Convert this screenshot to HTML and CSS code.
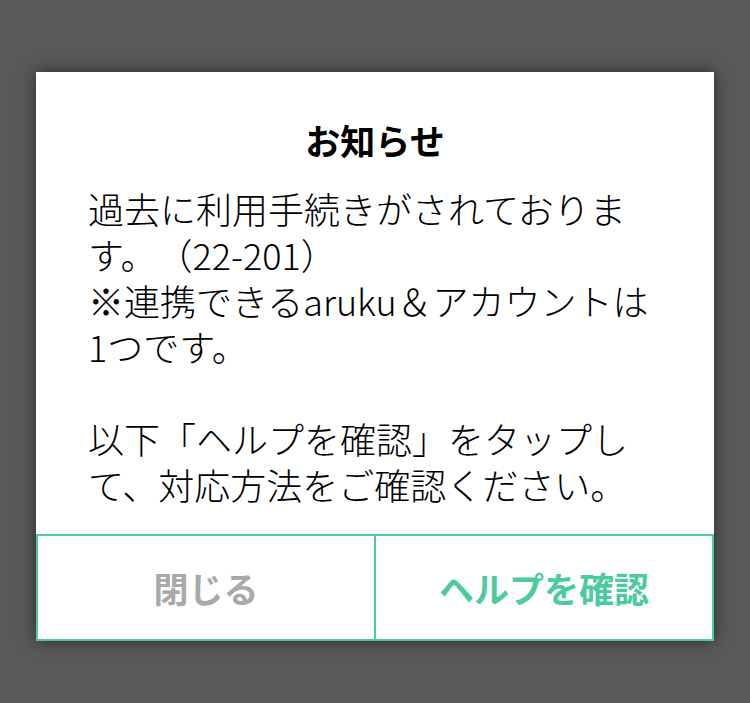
FILE: index.html
```html
<!DOCTYPE html>
<html lang="ja">
<head>
<meta charset="utf-8">
<title>お知らせ</title>
<link rel="stylesheet" href="styles.css">
</head>
<body>
<div class="overlay">
  <div class="dialog">
    <h1 class="dialog-title">お知らせ</h1>
    <div class="dialog-body">
      <p>過去に利用手続きがされております。（22-201）<br>※連携できるaruku＆アカウントは1つです。</p>
      <p>以下「ヘルプを確認」をタップして、対応方法をご確認ください。</p>
    </div>
    <div class="actions">
      <button class="btn btn-close">閉じる</button>
      <button class="btn btn-help">ヘルプを確認</button>
    </div>
  </div>
</div>
</body>
</html>
```
FILE: styles.css
```css
html, body {
  margin: 0;
  padding: 0;
  background: #595959;
  height: 100%;
}
body {
  font-family: "Noto Sans CJK JP", "Noto Sans", sans-serif;
  color: #000;
  text-spacing-trim: space-all;
}
.overlay {
  display: flex;
  justify-content: center;
  padding-top: 72px;
}
.dialog {
  width: 678px;
  background: #fff;
  box-shadow: 0 0 14px rgba(0, 0, 0, 0.55);
  display: flex;
  flex-direction: column;
}
.dialog-title {
  margin: 45px 0 0;
  font-size: 35px;
  line-height: 46px;
  font-weight: 700;
  text-align: center;
}
.dialog-body {
  margin-top: 22px;
  padding: 0 52px;
  font-size: 36px;
  line-height: 46px;
  font-weight: 300;
}
.dialog-body p {
  margin: 0 0 46px;
}
.dialog-body p:last-child {
  margin-bottom: 0;
}
.actions {
  margin-top: 27px;
  display: grid;
  grid-template-columns: 336px 1fr;
  border: 2px solid #4ccaa0;
}
.btn {
  height: 103px;
  border: 0;
  background: #fff;
  font-family: inherit;
  font-size: 35px;
  font-weight: 700;
  padding: 0;
  cursor: pointer;
  text-spacing-trim: space-all;
}
.btn + .btn {
  border-left: 2px solid #4ccaa0;
}
.btn-close {
  color: #a9a9a9;
}
.btn-help {
  color: #4ccaa0;
}
```
